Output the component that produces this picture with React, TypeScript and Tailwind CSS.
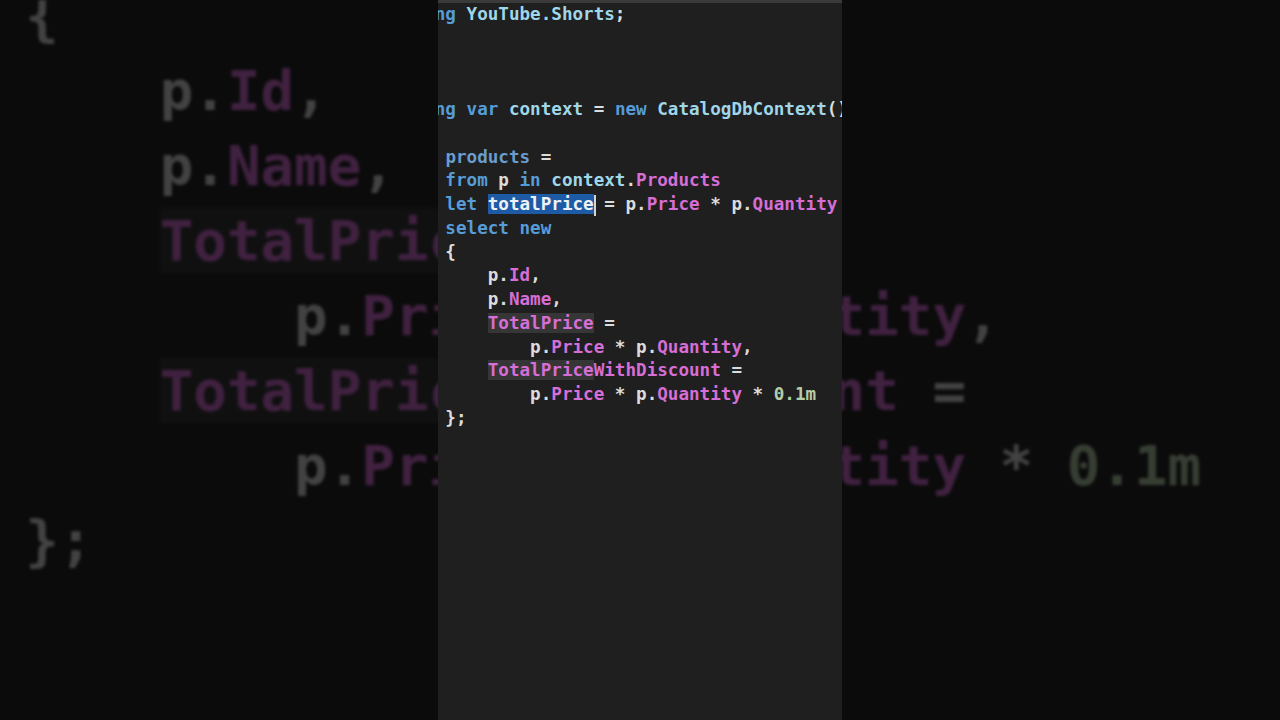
import React from 'react'

type Tok = [string, string?]

const KW = 'text-[#569cd6]'
const LOCAL = 'text-[#6a9ccc]'
const IDENT = 'text-[#9fd6e8]'
const PROP = 'text-[#d66ed6]'
const PLAIN = 'text-[#dcdcdc]'
const NUM = 'text-[#b5cea8]'
const SEL = 'sel'
const HL = 'hl'

const lines: Tok[][] = [
  [['using', KW], [' '], ['YouTube.Shorts', IDENT], [';', PLAIN]],
  [],
  [],
  [],
  [['using', KW], [' '], ['var', KW], [' '], ['context', IDENT], [' = ', PLAIN], ['new', KW], [' '], ['CatalogDbContext', IDENT], ['();', PLAIN]],
  [],
  [['var', KW], [' '], ['products', LOCAL], [' =', PLAIN]],
  [['    from', KW], [' '], ['p', PLAIN], [' '], ['in', KW], [' '], ['context', IDENT], ['.', PLAIN], ['Products', PROP]],
  [['    let', KW], [' '], ['totalPrice', SEL], [' = ', PLAIN], ['p', PLAIN], ['.', PLAIN], ['Price', PROP], [' * ', PLAIN], ['p', PLAIN], ['.', PLAIN], ['Quantity', PROP]],
  [['    select new', KW]],
  [['    {', PLAIN]],
  [['        p', PLAIN], ['.', PLAIN], ['Id', PROP], [',', PLAIN]],
  [['        p', PLAIN], ['.', PLAIN], ['Name', PROP], [',', PLAIN]],
  [['        '], ['TotalPrice', HL], [' =', PLAIN]],
  [['            p', PLAIN], ['.', PLAIN], ['Price', PROP], [' * ', PLAIN], ['p', PLAIN], ['.', PLAIN], ['Quantity', PROP], [',', PLAIN]],
  [['        '], ['TotalPrice', HL], ['WithDiscount', PROP], [' =', PLAIN]],
  [['            p', PLAIN], ['.', PLAIN], ['Price', PROP], [' * ', PLAIN], ['p', PLAIN], ['.', PLAIN], ['Quantity', PROP], [' * ', PLAIN], ['0.1m', NUM]],
  [['    };', PLAIN]],
]

function Token({ t, big }: { t: Tok; big?: boolean }) {
  const [text, cls] = t
  if (cls === SEL) {
    return (
      <>
        <span className="bg-[#1e5ba6] text-[#eef2f6]">{text}</span>
        <span className={big ? 'inline-block w-[6px] -mr-[6px] h-[66px] align-middle bg-[#d4d4d4]' : 'inline-block w-[2px] -mr-[2px] h-[21px] align-middle bg-[#d4d4d4]'} />
      </>
    )
  }
  if (cls === HL) {
    return <span className={'bg-[#363636] ' + PROP}>{text}</span>
  }
  return <span className={cls}>{text}</span>
}

function Code({ big }: { big?: boolean }) {
  return (
    <div
      className={
        big
          ? "font-['DejaVu_Sans_Mono',monospace] font-bold text-[55.8px] leading-[75px] -ml-[109px] -mt-[772px]"
          : "font-['DejaVu_Sans_Mono',monospace] font-bold text-[17.6px] leading-[23.75px] -ml-[35px]"
      }
    >
      {lines.map((l, i) => (
        <div key={i} className={big ? 'h-[75px] whitespace-pre' : 'h-[23.75px] whitespace-pre'}>
          {l.map((t, j) => (
            <Token key={j} t={t} big={big} />
          ))}
        </div>
      ))}
    </div>
  )
}

export default function App() {
  return (
    <div className="relative w-[1280px] h-[720px] overflow-hidden bg-[#0b0b0b] flex justify-center">
      {/* blurred, zoomed backdrop of the same frame */}
      <div className="absolute inset-0 overflow-hidden bg-[#242424] brightness-[.3] blur-[1.5px]">
        <Code big />
      </div>

      <div className="relative w-[404px] h-full bg-[#1f1f1f] flex flex-col overflow-hidden">
        <div className="h-[3px] bg-[#3a3a3a] shrink-0" />
        <Code />
      </div>
    </div>
  )
}
